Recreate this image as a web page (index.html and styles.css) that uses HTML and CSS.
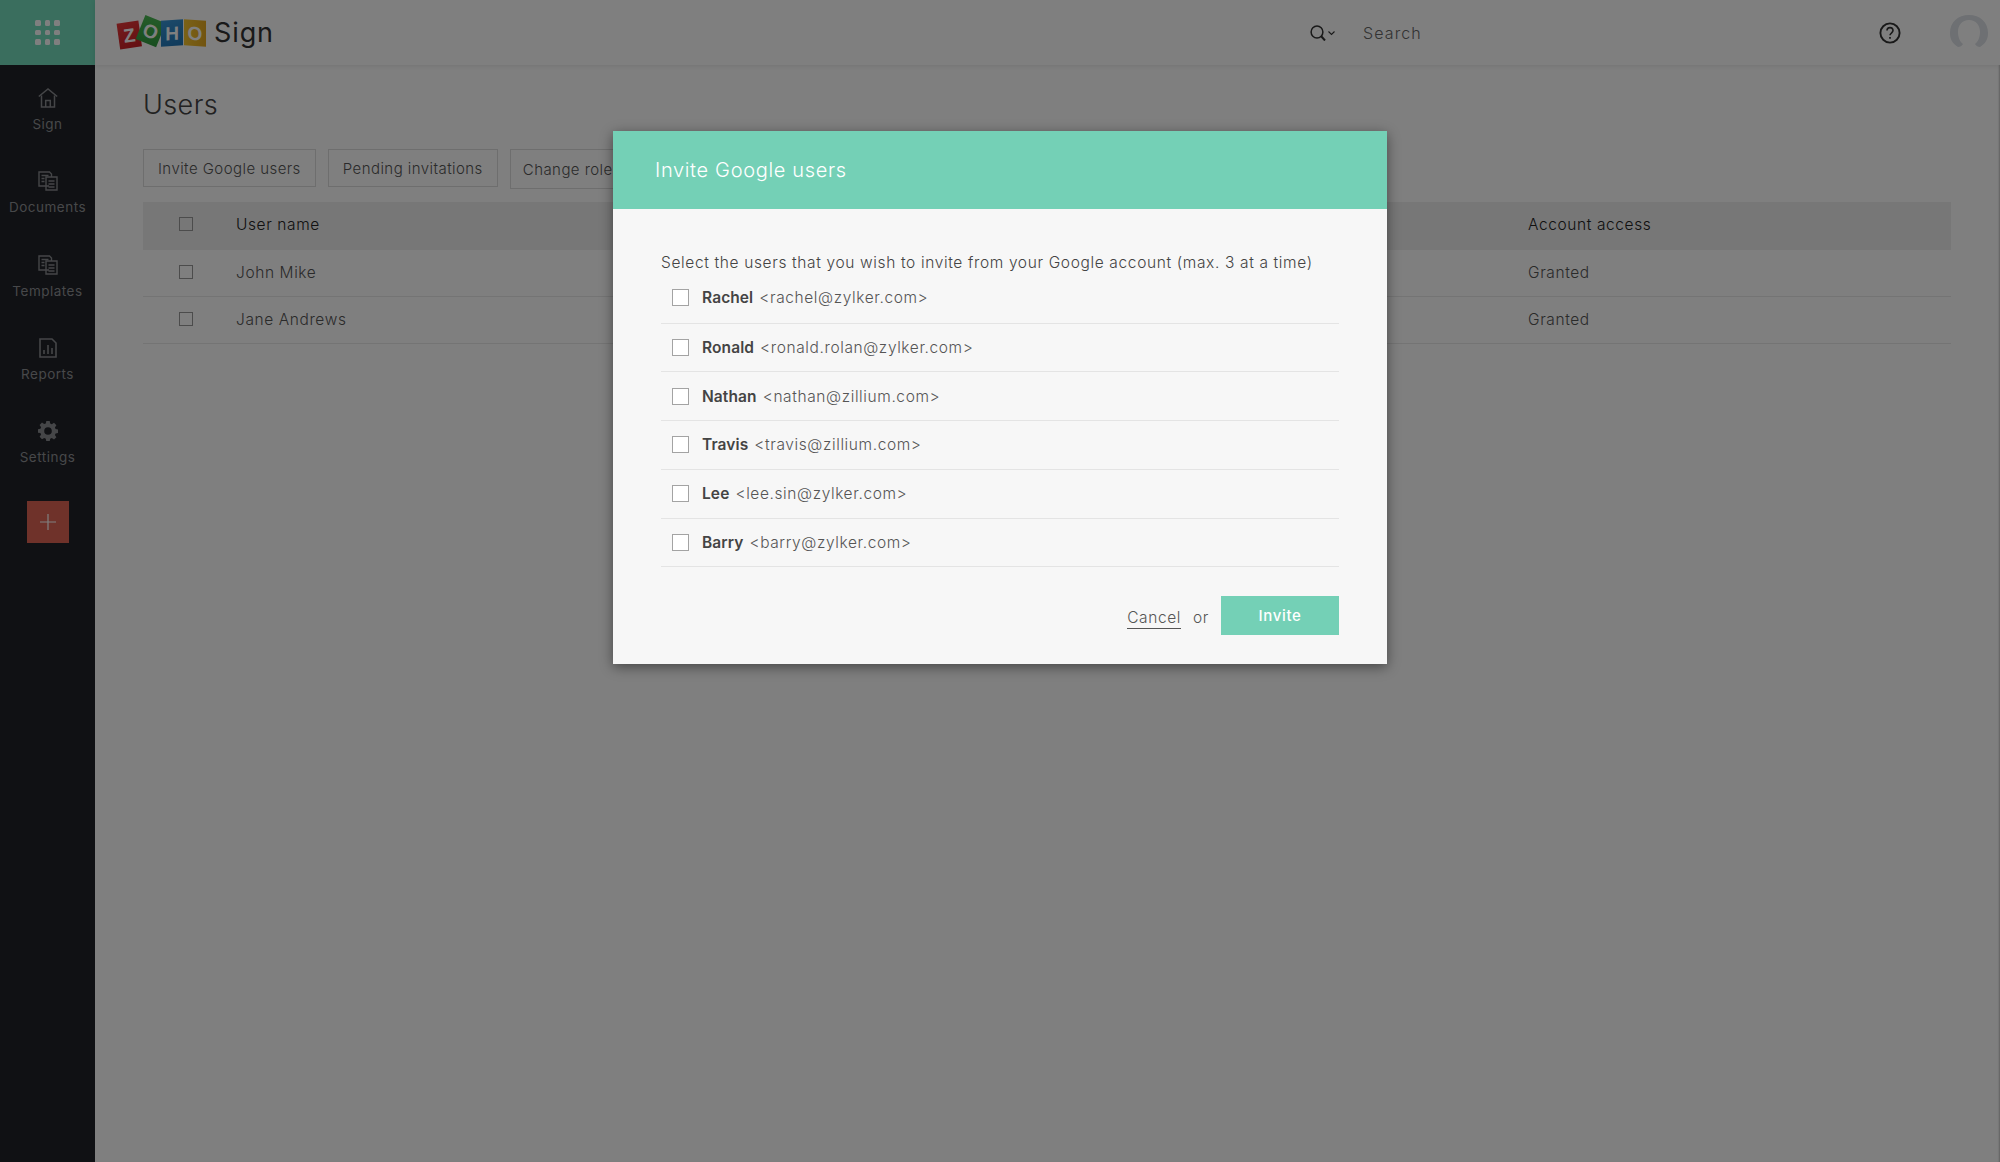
FILE: index.html
```html
<!DOCTYPE html>
<html lang="en">
<head>
<meta charset="utf-8">
<title>Zoho Sign - Users</title>
<link rel="stylesheet" href="styles.css">
</head>
<body>
<div class="app">
  <aside class="sidebar">
    <div class="apps">
      <div class="dots"><i></i><i></i><i></i><i></i><i></i><i></i><i></i><i></i><i></i></div>
    </div>
    <nav class="nav">
      <a class="nav-item">
        <svg class="nav-icon" viewBox="0 0 20 20" fill="none" stroke="currentColor" stroke-width="1.5"><path d="M.8 8.5 10 1l9.2 7.5"/><path d="M3.5 7.5V19h13V7.5"/><path d="M7.7 19v-6.5h4.6V19"/></svg>
        <span>Sign</span>
      </a>
      <a class="nav-item">
        <svg class="nav-icon" viewBox="0 0 20 20" fill="none" stroke="currentColor" stroke-width="1.4"><path d="M11 15H1V1h10.5l2 2v3"/><path d="M8 6h6l5 0v13H8z"/><path d="M3.500 4.500h7M3.500 7.500h3M3.500 10.500h3M10.500 10h6M10.500 13h6M10.500 16h6"/></svg>
        <span>Documents</span>
      </a>
      <a class="nav-item">
        <svg class="nav-icon" viewBox="0 0 20 20" fill="none" stroke="currentColor" stroke-width="1.4"><path d="M11 15H1V1h10.500l2 2v3"/><path d="M8 6h6l5 0v13H8z"/><path d="M3.500 4.500h7M3.500 7.500h3M3.500 10.500h3M10.500 10h6M10.500 13h6M10.500 16h6"/></svg>
        <span>Templates</span>
      </a>
      <a class="nav-item">
        <svg class="nav-icon" viewBox="0 0 20 20" fill="none" stroke="currentColor" stroke-width="1.6"><path d="M2 1h12l4 4v14H2z"/><path d="M6 16v-4M10 16V7M14 16v-6"/></svg>
        <span>Reports</span>
      </a>
      <a class="nav-item">
        <svg class="nav-icon" viewBox="0 0 20 20" fill="currentColor"><path fill-rule="evenodd" d="M8.300 0h3.400l.5 2.600 1.600.7 2.200-1.500 2.400 2.400-1.500 2.200.7 1.600 2.400.5v3.400l-2.400.5-.7 1.600 1.500 2.200-2.400 2.400-2.200-1.500-1.600.7-.5 2.700H8.300l-.5-2.700-1.600-.7L4 18.200l-2.400-2.400 1.500-2.200-.7-1.600L0 11.700V8.300l2.400-.5.7-1.600-1.500-2.200L4 1.600l2.200 1.500 1.600-.7zM10 6.200a3.800 3.800 0 1 0 0 7.600 3.800 3.800 0 0 0 0-7.600z"/></svg>
        <span>Settings</span>
      </a>
    </nav>
    <button class="add" type="button" aria-label="Add">
      <svg viewBox="0 0 16 16" fill="none" stroke="currentColor" stroke-width="1.200"><path d="M8 0v16M0 8h16"/></svg>
    </button>
  </aside>

  <div class="main">
    <header class="topbar">
      <div class="brand">
        <div class="logo" aria-label="Zoho">
          <span class="tile tile-z">Z</span><span class="tile tile-o1">O</span><span class="tile tile-h">H</span><span class="tile tile-o2">O</span>
        </div>
        <span class="brand-name">Sign</span>
      </div>
      <div class="search">
        <svg class="search-icon" viewBox="0 0 26 16" fill="none" stroke="currentColor"><circle cx="7" cy="7" r="5.900" stroke-width="1.500"/><path d="M11 11l4 4.500" stroke-width="2"/><path d="M18.500 6.500l3 3 3-3" stroke-width="1.100"/></svg>
        <span class="search-text">Search</span>
      </div>
      <div class="tools">
        <svg class="help" viewBox="0 0 22 22" fill="none" stroke="currentColor" stroke-width="1.900"><circle cx="11" cy="11" r="9.600"/><path d="M8 8.600c0-4 6-4 6 0 0 2.400-3 2.400-3 4.600" stroke-width="1.600"/><path d="M11 15v1.800" stroke-width="1.700"/></svg>
        <svg class="avatar" viewBox="0 0 38 32"><path d="M8 32C2 28 0 24 0 18 0 7 8 0 19 0s19 7 19 18c0 6-2 10-8 14-2 0-4-1-5-3 3-2 5-7 5-12 0-7-4-12-11-12S8 10 8 17c0 5 2 10 5 12-1 2-3 3-5 3z"/></svg>
      </div>
    </header>

    <main class="content">
      <h1 class="title">Users</h1>
      <div class="actions">
        <button class="btn" type="button">Invite Google users</button>
        <button class="btn" type="button">Pending invitations</button>
        <button class="btn btn-role" type="button">Change role</button>
      </div>
      <div class="table">
        <div class="row head">
          <span class="box"></span><span class="name">User name</span><span class="access">Account access</span>
        </div>
        <div class="row">
          <span class="box"></span><span class="name">John Mike</span><span class="access">Granted</span>
        </div>
        <div class="row">
          <span class="box"></span><span class="name">Jane Andrews</span><span class="access">Granted</span>
        </div>
      </div>
    </main>
  </div>
</div>

<div class="overlay"></div>

<section class="modal">
  <h2 class="modal-head">Invite Google users</h2>
  <div class="modal-body">
    <p class="intro">Select the users that you wish to invite from your Google account (max. 3 at a time)</p>
    <ul class="list">
      <li class="person"><span class="pbox"></span><b>Rachel</b><span class="mail">&lt;rachel@zylker.com&gt;</span></li>
      <li class="person"><span class="pbox"></span><b>Ronald</b><span class="mail">&lt;ronald.rolan@zylker.com&gt;</span></li>
      <li class="person"><span class="pbox"></span><b>Nathan</b><span class="mail">&lt;nathan@zillium.com&gt;</span></li>
      <li class="person"><span class="pbox"></span><b>Travis</b><span class="mail">&lt;travis@zillium.com&gt;</span></li>
      <li class="person"><span class="pbox"></span><b>Lee</b><span class="mail">&lt;lee.sin@zylker.com&gt;</span></li>
      <li class="person"><span class="pbox"></span><b>Barry</b><span class="mail">&lt;barry@zylker.com&gt;</span></li>
    </ul>
    <div class="footer">
      <a class="cancel">Cancel</a>
      <span class="or">or</span>
      <button class="invite" type="button">Invite</button>
    </div>
  </div>
</section>
</body>
</html>
```

FILE: styles.css
```css
* { box-sizing: border-box; }
html, body { margin: 0; height: 100%; }
body {
  width: 2000px;
  height: 1162px;
  overflow: hidden;
  position: relative;
  background: #fff;
  font-family: "Inter", "Open Sans", sans-serif;
  font-weight: 300;
  color: #555;
}
.app { display: flex; height: 1162px; }

/* sidebar */
.sidebar { width: 95px; flex: none; background: #202228; display: flex; flex-direction: column; align-items: center; }
.apps { width: 95px; height: 65px; background: #74dcbc; display: flex; align-items: center; justify-content: center; }
.dots { display: grid; grid-template-columns: repeat(3, 5.500px); gap: 4px; }
.dots i { width: 5.500px; height: 5.500px; border-radius: 1.500px; background: #fff; }
.nav { display: flex; flex-direction: column; padding-top: 23px; }
.nav-item { width: 95px; height: 83.300px; display: flex; flex-direction: column; align-items: center; color: #8f9194; font-size: 13.500px; letter-spacing: .5px; font-weight: 400; }
.nav-icon { width: 20px; height: 20px; margin-bottom: 8px; color: #8a8c90; flex: none; }
.add { width: 42px; height: 42px; margin: -3px 0 0 1px; padding: 13px; border: 0; background: #de6555; color: #fff; display: flex; }
.add svg { width: 16px; height: 16px; }

/* top bar */
.main { flex: 1; min-width: 0; display: flex; flex-direction: column; box-shadow: inset -2px 0 2px -1px rgba(0,0,0,.25); }
.topbar { height: 65px; flex: none; display: flex; align-items: center; padding: 0 10px 0 23px; box-shadow: 0 1px 5px rgba(0,0,0,.1); background: #fff; }
.brand { display: flex; align-items: center; gap: 8px; width: 1192px; flex: none; }
.logo { display: flex; width: 88px; height: 34px; align-items: center; }
.tile { width: 22px; height: 26px; display: flex; align-items: center; justify-content: center; color: #fff; font: 700 19px/1 "Liberation Sans", sans-serif; }
.tile-z { background: linear-gradient(160deg, #e8393a, #c81f24); transform: rotate(-8deg) translateY(2px); }
.tile-o1 { background: linear-gradient(160deg, #4cb954, #2f9a3e); transform: rotate(22deg) translateY(-2px); margin-left: -1px; }
.tile-h { background: linear-gradient(160deg, #3a94d4, #1f74b6); transform: skewY(-4deg); }
.tile-o2 { background: linear-gradient(90deg, #f6c530, #e4a820); transform: skewY(4deg); margin-left: 1px; }
.brand-name { font-size: 27px; font-weight: 400; color: #333; letter-spacing: .9px; }
.search { display: flex; align-items: center; gap: 27px; flex: 1; }
.search-icon { width: 26px; height: 16px; color: #333; }
.search-text { font-size: 16px; letter-spacing: 1.100px; color: #666; }
.tools { display: flex; align-items: center; gap: 49px; }
.help { width: 22px; height: 22px; color: #333; margin-top: 1px; }
.avatar { width: 38px; height: 32px; fill: #dce0e6; margin: -3px 2px 0 0; }

/* users page */
.content { flex: 1; padding: 22px 49px 0 48px; }
.title { margin: 0; font-size: 27px; line-height: 36px; font-weight: 300; color: #444; letter-spacing: .4px; }
.actions { display: flex; gap: 12px; margin-top: 26px; align-items: flex-start; }
.btn { height: 38px; padding: 0 14px; background: transparent; border: 1px solid #dcdcdc; font: inherit; font-size: 15px; letter-spacing: .44px; color: #555; }
.btn-role { height: 40px; padding: 0 50px 0 12px; }
.table { margin-top: 13px; }
.row { height: 47px; display: flex; align-items: center; padding-bottom: 2px; border-bottom: 1px solid #e8e8e8; font-size: 15.500px; letter-spacing: .6px; color: #555; }
.head { height: 48px; padding-bottom: 4px; background: #eee; border-bottom: 0; color: #222; }
.box { width: 14px; height: 14px; border: 1px solid #999; margin-left: 36px; flex: none; }
.name { width: 1292px; margin-left: 43px; flex: none; }

/* overlay and modal */
.overlay { position: absolute; inset: 0; background: rgba(0,0,0,.5); }
.modal { position: absolute; left: 613px; top: 131px; width: 774px; height: 533px; background: #f7f7f7; box-shadow: 0 3px 12px rgba(0,0,0,.45); }
.modal-head { margin: 0; height: 78px; padding-left: 42px; background: #74d0b6; color: #fff; font-size: 20px; font-weight: 300; line-height: 78px; letter-spacing: .66px; }
.modal-body { padding: 44px 48px 0; }
.intro { margin: 0; font-size: 15.500px; line-height: 20px; letter-spacing: .64px; color: #444; }
.list { list-style: none; margin: 0; padding: 0; }
.person { height: 48.750px; display: flex; align-items: center; padding-left: 11px; border-bottom: 1px solid #e4e4e4; font-size: 15.500px; letter-spacing: .6px; color: #555; }
.person:first-child { height: 50.500px; }
.pbox { width: 17px; height: 17px; border: 1px solid #a3a3a3; margin-right: 13px; flex: none; background: #fff; }
.person b { font-weight: 600; color: #444; margin-right: 6px; letter-spacing: .1px; }
.footer { display: flex; justify-content: flex-end; align-items: center; margin-top: 29px; font-size: 15.500px; letter-spacing: .6px; color: #555; }
.cancel { border-bottom: 1.500px solid #555; line-height: 21px; margin-top: 4px; }
.or { margin: 4px 12px 0; }
.invite { width: 118px; height: 39px; border: 0; background: #74d0b6; color: #fff; font: inherit; font-size: 15px; font-weight: 500; letter-spacing: .7px; }
```
